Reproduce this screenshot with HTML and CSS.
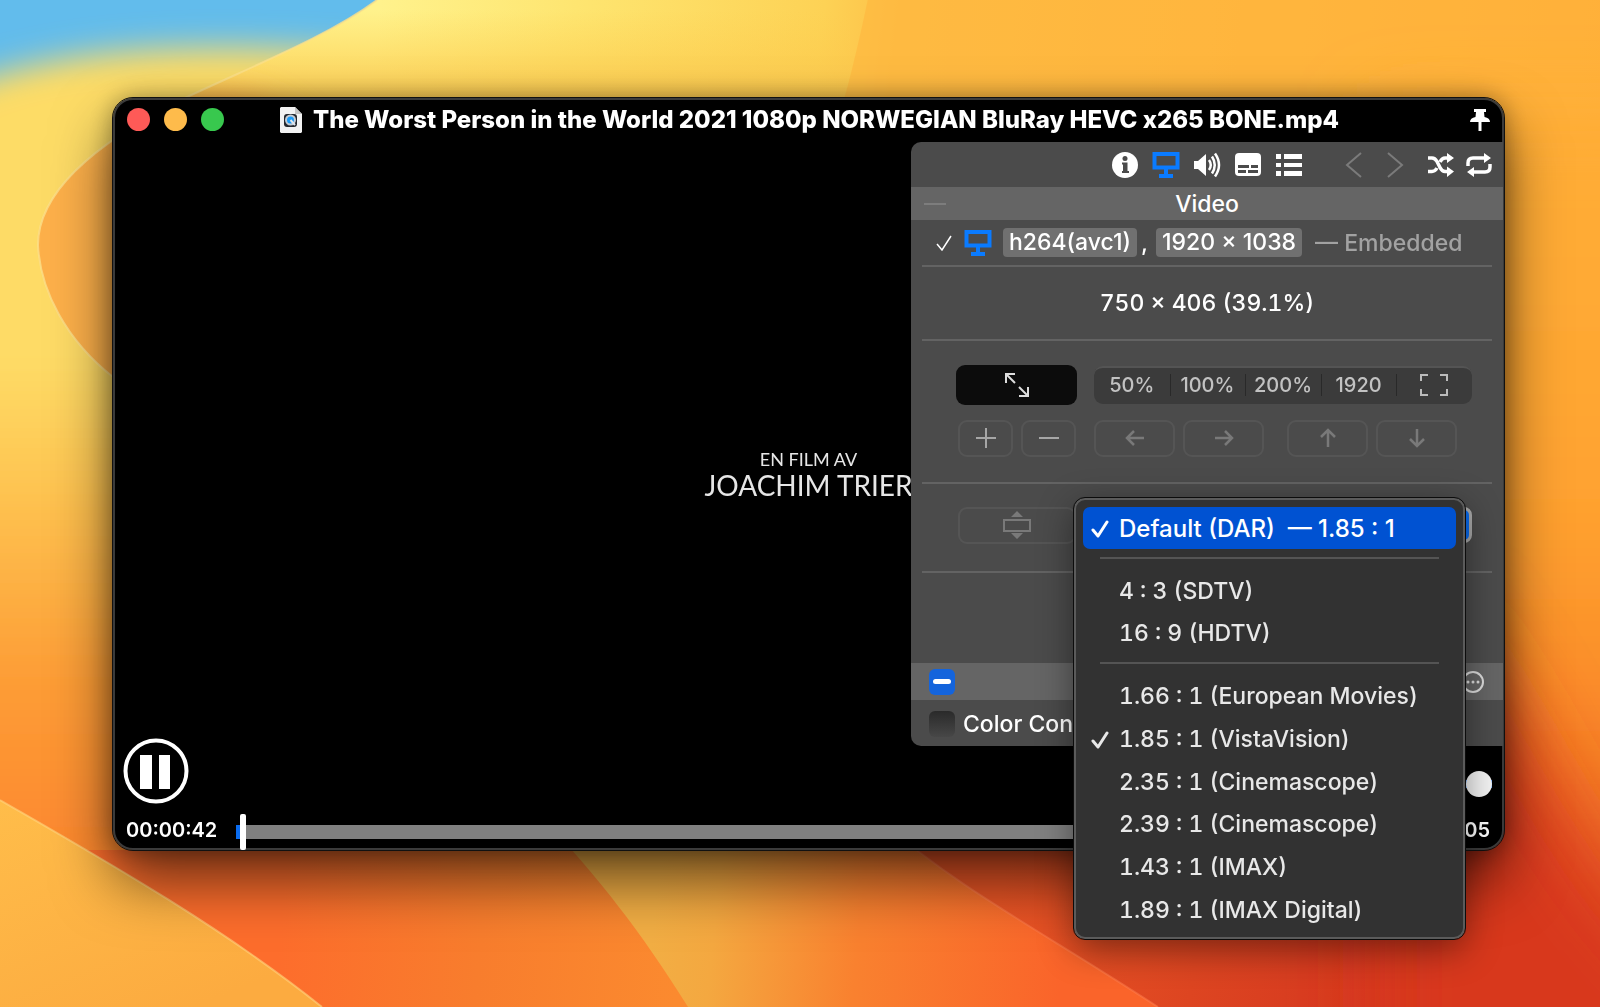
FILE: index.html
```
<!DOCTYPE html>
<html lang="en">
<head>
<meta charset="utf-8">
<title>Video Player</title>
<link rel="stylesheet" href="styles.css">
</head>
<body>
<svg class="wallpaper" viewBox="0 0 1600 1007" preserveAspectRatio="none" aria-hidden="true">
  <defs>
    <linearGradient id="left" x1="0" y1="0" x2="0" y2="1">
      <stop offset="0" stop-color="#fddc66"/><stop offset="0.3" stop-color="#fedb66"/><stop offset="0.4" stop-color="#fec854"/><stop offset="0.6" stop-color="#fd9d36"/><stop offset="0.8" stop-color="#fd842d"/><stop offset="1" stop-color="#fb6c2b"/>
    </linearGradient>
    <linearGradient id="base" gradientUnits="userSpaceOnUse" x1="380" y1="0" x2="1600" y2="140">
      <stop offset="0" stop-color="#fff28c"/><stop offset="0.16" stop-color="#fee570"/><stop offset="0.36" stop-color="#fdd255"/><stop offset="0.42" stop-color="#fdc148"/><stop offset="0.7" stop-color="#feb53e"/><stop offset="1" stop-color="#ffa934"/>
    </linearGradient>
    <linearGradient id="warm" x1="0" y1="0" x2="0" y2="1">
      <stop offset="0" stop-color="#fcd050" stop-opacity="0"/><stop offset="1" stop-color="#fcc64c"/>
    </linearGradient>
    <linearGradient id="right" x1="0" y1="0" x2="0" y2="1">
      <stop offset="0.1" stop-color="#ffac36"/><stop offset="0.4" stop-color="#ffa22f"/><stop offset="0.6" stop-color="#fa8a29"/><stop offset="0.78" stop-color="#ec6624"/><stop offset="1" stop-color="#d83a20"/>
    </linearGradient>
    <linearGradient id="corner" x1="0" y1="0" x2="0.6" y2="1">
      <stop offset="0" stop-color="#ffbd4a"/><stop offset="1" stop-color="#fcab40"/>
    </linearGradient>
    <linearGradient id="lower" gradientUnits="userSpaceOnUse" x1="280" y1="930" x2="680" y2="960">
      <stop offset="0" stop-color="#fd6d2c"/><stop offset="0.5" stop-color="#f87d2d"/><stop offset="1" stop-color="#fb8a2f"/>
    </linearGradient>
    <linearGradient id="wedge" gradientUnits="userSpaceOnUse" x1="650" y1="950" x2="1060" y2="990">
      <stop offset="0" stop-color="#f2ae44"/><stop offset="0.15" stop-color="#f4a840"/><stop offset="0.5" stop-color="#f9812f"/><stop offset="1" stop-color="#fa642a"/>
    </linearGradient>
    <linearGradient id="red" gradientUnits="userSpaceOnUse" x1="1000" y1="900" x2="1400" y2="960">
      <stop offset="0" stop-color="#ea5525"/><stop offset="0.5" stop-color="#dd4521"/><stop offset="1" stop-color="#d4361f"/>
    </linearGradient>
    <filter id="soft" filterUnits="userSpaceOnUse" x="-200" y="-200" width="2000" height="1500"><feGaussianBlur stdDeviation="16"/></filter>
    <filter id="softer" filterUnits="userSpaceOnUse" x="-200" y="-200" width="2200" height="1700"><feGaussianBlur stdDeviation="40"/></filter>
    <clipPath id="body"><path d="M377 0C330 35 262 62 187 97C80 150 38 200 38 245C40 290 66 340 113 377V800H1600V0Z"/></clipPath>
  </defs>
  <rect width="1600" height="1007" fill="#62bcec"/>
  <path d="M-60 96C40 52 160 38 380 54V1100H-60Z" fill="url(#left)" filter="url(#soft)"/>
  <g clip-path="url(#body)">
    <rect width="1600" height="1007" fill="url(#base)"/>
    <rect y="10" width="850" height="100" fill="url(#warm)"/>
    <path d="M0 130L190 96C240 84 300 110 340 170L400 500H0Z" fill="#fdb04a" filter="url(#soft)"/>
    <path d="M0 150H190V420H0Z" fill="#fdb04a"/>
    <path d="M880 -60C860 40 845 110 812 200L1700 300V-60Z" fill="#ffb63e" opacity=".6"/>
  </g>
  <path d="M377 0C330 35 262 62 187 97C80 150 38 200 38 245C40 290 66 340 113 377" fill="none" stroke="#fbe08a" stroke-width="2" opacity=".8"/>
  <path d="M1380 120H1720V1100H1380Z" fill="url(#right)" filter="url(#softer)"/>
  <path d="M0 850H800L700 1007H0Z" fill="url(#lower)"/>
  <path d="M0 800C90 852 220 925 322 1007H0Z" fill="url(#corner)"/>
  <path d="M0 800C90 852 220 925 322 1007" fill="none" stroke="#ffd680" stroke-width="2" opacity=".6"/>
  <path d="M545 820C600 880 640 930 688 1007H1250V820Z" fill="url(#wedge)"/>
  <path d="M880 820C960 890 1040 930 1158 1007H1480V820Z" fill="url(#red)"/>
  <path d="M880 820C960 890 1040 930 1158 1007" fill="none" stroke="#ff8050" stroke-width="2" opacity=".5"/>
  <path d="M1430 600C1540 720 1560 870 1720 990V1120H1380V900Z" fill="#d8381f" filter="url(#softer)"/>
</svg>

<main class="desktop">
  <section class="window" aria-label="Video player">
    <header class="titlebar">
      <div class="lights">
        <button class="light close" aria-label="Close"></button>
        <button class="light minimize" aria-label="Minimize"></button>
        <button class="light zoom" aria-label="Zoom"></button>
      </div>
      <h1 class="title">
        <svg width="24" height="28" viewBox="0 0 24 28" aria-hidden="true">
          <path d="M2 1H16L23 8V26L22 27H2L1 26V2Z" fill="#f2f2f2"/><path d="M16 1V8H23Z" fill="#c4c4c4"/>
          <rect x="5" y="8" width="13" height="13" rx="3" fill="#25282e"/>
          <circle cx="11.500" cy="14" r="4.500" fill="#1c9af5" stroke="#c3ccd6" stroke-width="2"/><path d="M11.500 14L16 19" stroke="#dfe6ee" stroke-width="2"/>
        </svg>
        <span>The Worst Person in the World 2021 1080p NORWEGIAN BluRay HEVC x265 BONE.mp4</span>
      </h1>
      <button class="pin" aria-label="Keep on top">
        <svg width="22" height="22" viewBox="0 0 22 22"><path d="M5 0H17V3H15L15.500 8Q21 9 21 13H12.500V22H9.500V13H1Q1 9 6.500 8L7 3H5Z" fill="#fff"/></svg>
      </button>
    </header>

    <div class="stage">
      <div class="film">
        <p class="film-small">EN FILM AV</p>
        <p class="film-big">JOACHIM TRIER</p>
      </div>

      <aside class="panel">
        <nav class="toolbar" aria-label="Inspector">
          <button aria-label="Info"><svg width="28" height="28" viewBox="0 0 28 28"><circle cx="14" cy="14" r="13" fill="#fff"/><circle cx="14" cy="7.500" r="2.500" fill="#4b4b4b"/><path d="M11 11.500H16.500V20H18V22H11V20H12V13.500H11Z" fill="#4b4b4b"/></svg></button>
          <button aria-label="Video"><svg width="28" height="28" viewBox="0 0 28 28"><path d="M2.500 3H25.500V16.500H2.500Z" fill="none" stroke="#0a7bff" stroke-width="4"/><path d="M12 18H16V23H21V27H7V23H12Z" fill="#0a7bff"/></svg></button>
          <button aria-label="Audio"><svg width="28" height="28" viewBox="0 0 28 28"><path d="M1 10H5L13 3V25L5 18H1Z" fill="#fff"/><path d="M16 9Q19.500 14 16 19M19 5.500Q24.500 14 19 22.500M22 2.500Q30 14 22 25.500" fill="none" stroke="#fff" stroke-width="2.500"/></svg></button>
          <button aria-label="Subtitles"><svg width="28" height="28" viewBox="0 0 28 28"><rect x="1" y="2" width="26" height="23" rx="4" fill="#fff"/><path d="M4 14H15V17H4ZM17 14H24V17H17ZM4 19H12V22H4ZM14 19H24V22H14Z" fill="#4b4b4b"/></svg></button>
          <button aria-label="Playlist"><svg width="28" height="28" viewBox="0 0 28 28"><path d="M1 3H6V8H1ZM9 3H27V8H9ZM1 12H6V16H1ZM9 12H27V16H9ZM1 20H6V25H1ZM9 20H27V25H9Z" fill="#fff"/></svg></button>
          <span class="nav-pair">
            <button aria-label="Previous"><svg width="28" height="28" viewBox="0 0 28 28"><path d="M21 2L7 14L21 26" fill="none" stroke="#7b7b7b" stroke-width="2"/></svg></button>
            <button aria-label="Next"><svg width="28" height="28" viewBox="0 0 28 28"><path d="M7 2L21 14L7 26" fill="none" stroke="#7b7b7b" stroke-width="2"/></svg></button>
          </span>
          <span class="mode-pair">
            <button aria-label="Shuffle"><svg width="26" height="24" viewBox="0 0 26 24"><path d="M0 5H4Q7 5 9 8.500L12 14.500Q14 18.500 17 18.500H20M0 18.500H4Q7 18.500 9 15M12 9Q14 5 17 5H20" fill="none" stroke="#fff" stroke-width="3.500"/><path d="M19 0L26 5L19 10ZM19 13.500L26 18.500L19 24Z" fill="#fff"/></svg></button>
            <button aria-label="Repeat"><svg width="26" height="24" viewBox="0 0 26 24"><path d="M2 13V10Q2 5 7 5H19M24 11V14Q24 19 19 19H7" fill="none" stroke="#fff" stroke-width="3.500"/><path d="M18 0L25 5L18 10ZM8 14L1 19L8 24Z" fill="#fff"/></svg></button>
          </span>
        </nav>

        <div class="section-head"><span class="dash"></span><h2>Video</h2></div>

        <div class="track-row">
          <svg width="16" height="16" viewBox="0 0 16 16" aria-hidden="true"><path d="M1 9L6 15L15 1" fill="none" stroke="#fff" stroke-width="1.500"/></svg>
          <svg class="track-icon" width="28" height="28" viewBox="0 0 28 28" aria-hidden="true"><path d="M2.500 3H25.500V16.500H2.500Z" fill="none" stroke="#0a7bff" stroke-width="4"/><path d="M12 18H16V23H21V27H7V23H12Z" fill="#0a7bff"/></svg>
          <span class="tag">h264(avc1)</span><span class="comma">,</span><span class="tag">1920 × 1038</span>
          <span class="origin">— Embedded</span>
        </div>

        <div class="size-row">750 × 406 (39.1%)</div>

        <div class="scale-block">
          <div class="scale-row">
            <button class="fit" aria-label="Fit"><svg width="26" height="26" viewBox="0 0 26 26"><path d="M2 11V2H11M3 3L11 11M15 15L23 23M24 15V24H15" fill="none" stroke="#ddd" stroke-width="2"/></svg></button>
            <div class="segments">
              <button>50%</button><button>100%</button><button>200%</button><button>1920</button>
              <button aria-label="Full screen"><svg width="28" height="22" viewBox="0 0 28 22"><path d="M8 1H1V7M20 1H27V7M1 15V21H8M27 15V21H20" fill="none" stroke="#bbb" stroke-width="2"/></svg></button>
            </div>
          </div>
          <div class="move-row">
            <div class="pair small">
              <button aria-label="Larger"><svg width="20" height="20" viewBox="0 0 20 20"><path d="M10 0V20M0 10H20" stroke="#a6a6a6" stroke-width="2"/></svg></button>
              <button aria-label="Smaller"><svg width="20" height="20" viewBox="0 0 20 20"><path d="M0 10H20" stroke="#a6a6a6" stroke-width="2"/></svg></button>
            </div>
            <div class="pair wide">
              <button aria-label="Left"><svg width="20" height="20" viewBox="0 0 20 20"><path d="M19 10H2M9 3L2 10L9 17" fill="none" stroke="#797979" stroke-width="2.500"/></svg></button>
              <button aria-label="Right"><svg width="20" height="20" viewBox="0 0 20 20"><path d="M1 10H18M11 3L18 10L11 17" fill="none" stroke="#797979" stroke-width="2.500"/></svg></button>
            </div>
            <div class="pair wide">
              <button aria-label="Up"><svg width="20" height="20" viewBox="0 0 20 20"><path d="M10 19V2M3 9L10 2L17 9" fill="none" stroke="#797979" stroke-width="2.500"/></svg></button>
              <button aria-label="Down"><svg width="20" height="20" viewBox="0 0 20 20"><path d="M10 1V18M3 11L10 18L17 11" fill="none" stroke="#797979" stroke-width="2.500"/></svg></button>
            </div>
          </div>
        </div>

        <div class="aspect-row">
          <button class="stretch" aria-label="Stretch"><svg width="28" height="28" viewBox="0 0 28 28"><path d="M1 9H27V20H1Z" fill="none" stroke="#797979" stroke-width="2"/><path d="M8 6L14 0L20 6ZM8 22H20L14 28Z" fill="#797979"/></svg></button>
          <div class="popup">
            <button class="popup-button" aria-label="Aspect ratio" aria-haspopup="menu" aria-expanded="true"></button>
            <div class="menu" role="menu">
              <button class="item selected" role="menuitem"><svg class="check" width="18" height="18" viewBox="0 0 18 18"><path d="M2 10L7 16L16 2" fill="none" stroke="#fff" stroke-width="3" stroke-linecap="round" stroke-linejoin="round"/></svg>Default (DAR) &nbsp;— 1.85 : 1</button>
              <hr>
              <div class="group">
                <button class="item" role="menuitem">4 : 3 (SDTV)</button>
                <button class="item" role="menuitem">16 : 9 (HDTV)</button>
              </div>
              <hr>
              <div class="group ratios">
                <button class="item" role="menuitem">1.66 : 1 (European Movies)</button>
                <button class="item" role="menuitem"><svg class="check" width="18" height="18" viewBox="0 0 18 18"><path d="M2 10L7 16L16 2" fill="none" stroke="#e8e8e8" stroke-width="3" stroke-linecap="round" stroke-linejoin="round"/></svg>1.85 : 1 (VistaVision)</button>
                <button class="item" role="menuitem">2.35 : 1 (Cinemascope)</button>
                <button class="item" role="menuitem">2.39 : 1 (Cinemascope)</button>
                <button class="item" role="menuitem">1.43 : 1 (IMAX)</button>
                <button class="item" role="menuitem">1.89 : 1 (IMAX Digital)</button>
              </div>
            </div>
          </div>
        </div>

        <div class="spacer"></div>

        <div class="section-head filters">
          <input type="checkbox" class="box mixed" aria-label="All filters">
          <button class="more" aria-label="More"><svg width="24" height="24" viewBox="0 0 24 24"><circle cx="12" cy="12" r="10" fill="none" stroke="#ddd" stroke-width="2"/><circle cx="7" cy="12" r="1.500" fill="#ddd"/><circle cx="12" cy="12" r="1.500" fill="#ddd"/><circle cx="17" cy="12" r="1.500" fill="#ddd"/></svg></button>
        </div>
        <div class="color-row">
          <input type="checkbox" class="box" id="color"><label for="color">Color Controls</label>
        </div>
      </aside>
    </div>

    <footer class="controls">
      <div class="play-row">
        <button class="pause" aria-label="Pause"><svg width="66" height="66" viewBox="0 0 66 66"><circle cx="33" cy="33" r="30.500" fill="none" stroke="#fff" stroke-width="4"/><path d="M17 17H29V51H17ZM36 17H47V51H36Z" fill="#fff"/></svg></button>
        <input type="range" class="volume" aria-label="Volume" min="0" max="100" value="100">
      </div>
      <div class="time-row">
        <span class="time">00:00:42</span>
        <input type="range" class="seek" aria-label="Position" min="0" max="7685" value="24">
        <span class="time">02:08:05</span>
      </div>
    </footer>
  </section>
</main>
</body>
</html>
```

FILE: styles.css
```
* { box-sizing: border-box; }
body {
  margin: 0;
  font-family: Inter, "Liberation Sans", sans-serif;
  font-size: 23px;
  font-weight: 500;
  color: #fff;
  background: #fdb53e;
}
button { margin: 0; padding: 0; border: 0; background: none; color: inherit; font: inherit; display: flex; align-items: center; justify-content: center; }
svg { display: block; flex: none; }
h1, h2, p { margin: 0; font-weight: inherit; font-size: inherit; }
input { margin: 0; appearance: none; }

.wallpaper { position: fixed; inset: 0; width: 100%; height: 100%; z-index: -1; }
.desktop { min-height: 100vh; padding: 98px 96px 40px 113px; }

.window {
  border-radius: 20px;
  background: #000;
  border: 2px solid #3b3b3b;
  outline: 1px solid #111;
  box-shadow: 0 30px 60px rgba(0, 0, 0, .6), 0 0 24px rgba(0, 0, 0, .35);
}
.titlebar { height: 42px; display: grid; grid-template-columns: 1fr auto 1fr; align-items: center; padding: 0 11px 3px 12px; }
.lights { display: flex; gap: 14px; }
.light { width: 23px; height: 23px; border-radius: 50%; }
.close { background: #fe5a57; }
.minimize { background: #febb4b; }
.zoom { background: #38c84e; }
.title { display: flex; align-items: center; gap: 10px; font-size: 24px; line-height: 30px; font-weight: 800; white-space: nowrap; }
.pin { justify-self: end; }

.stage { display: grid; grid-template-columns: 1fr; justify-items: end; }
.film { grid-area: 1 / 1; justify-self: center; align-self: center; text-align: center; font-family: Lato, sans-serif; font-weight: 400; color: #e6e6e6; padding-top: 60px; }
.film-small { font-size: 18px; line-height: 22px; }
.film-big { font-size: 28px; line-height: 30px; }

.panel { grid-area: 1 / 1; position: relative; width: 592px; margin-right: -1px; background: #4b4b4b; border-radius: 10px 0 0 10px; }
.toolbar { height: 45px; display: flex; align-items: center; justify-content: flex-end; gap: 13px; padding-right: 11px; }
.nav-pair { display: flex; gap: 13px; margin-left: 24px; }
.mode-pair { display: flex; gap: 12px; margin-left: 6px; }
.section-head { height: 33px; background: #656565; display: flex; align-items: center; justify-content: center; position: relative; }
.dash { position: absolute; left: 13px; width: 22px; height: 2px; background: #7d7d7d; }
.track-row { height: 47px; margin: 0 11px; padding-left: 14px; display: flex; align-items: center; border-bottom: 2px solid #636363; white-space: nowrap; }
.track-icon { margin: 0 11px 0 12px; }
.tag { background: #707070; border-radius: 4px; padding: 0 6px; line-height: 29px; }
.comma { width: 19px; padding-left: 4px; }
.origin { color: #a2a2a2; margin-left: 13px; }
.size-row { height: 74px; margin: 0 11px; display: flex; align-items: center; justify-content: center; border-bottom: 2px solid #636363; font-variant-numeric: tabular-nums; }

.scale-block { height: 143px; margin: 0 11px; padding: 24px 20px 0 34px; border-bottom: 2px solid #636363; }
.scale-row { display: flex; gap: 17px; align-items: center; }
.fit { width: 121px; height: 40px; border-radius: 9px; background: #0c0c0c; }
.segments { flex: 1; height: 38px; border-radius: 9px; background: #3b3b3b; border-top: 2px solid #545454; padding-bottom: 2px; display: grid; grid-template-columns: repeat(5, 1fr); font-size: 20px; color: #c2c2c2; }
.segments button { position: relative; }
.segments button + button::before { content: ""; position: absolute; left: 0; top: 6px; width: 1px; height: 22px; background: #292929; }
.move-row { display: flex; margin: 15px 0 0 2px; }
.pair { display: flex; gap: 8px; }
.pair button, .stretch { height: 37px; border: 2px solid #555; border-radius: 9px; padding-bottom: 2px; }
.small { margin-right: 18px; }
.small button { width: 55px; }
.wide { margin-right: 23px; }
.wide button { width: 81px; }

.aspect-row { height: 89px; margin: 0 11px; padding: 23px 20px 0 36px; display: flex; gap: 18px; border-bottom: 2px solid #636363; }
.stretch { width: 118px; }
.popup { position: relative; flex: 1; }
.popup-button { width: 100%; height: 36px; border-radius: 8px; background: #0a6cf0; border: 3px solid #a9a9a9; }
.menu {
  position: absolute; z-index: 2; right: 7px; top: -9px; width: 391px;
  padding: 7px 7px 6px;
  background: #323232; border: 2px solid #5b5b5b; outline: 1px solid #0c0c0c; border-radius: 11px;
  box-shadow: 0 10px 36px rgba(0, 0, 0, .45);
}
.item { width: 100%; height: 42px; padding-left: 36px; justify-content: flex-start; color: #e8e8e8; white-space: nowrap; position: relative; border-radius: 7px; }
.selected { background: #0052d2; color: #fff; font-size: 24px; }
.check { position: absolute; left: 8px; top: 13px; }
.menu hr { height: 2px; margin: 8px 17px 11px; border: 0; background: #545454; }
.group { display: grid; font-variant-numeric: tabular-nums; }
.ratios { height: 256px; align-content: space-between; }

.spacer { height: 90px; }
.filters { height: 37px; justify-content: space-between; padding: 0 18px; }
.box { width: 26px; height: 26px; border-radius: 6px; background: linear-gradient(#2a2a2a, #474747); }
.mixed { background: #1464dc; display: grid; place-items: center; }
.mixed::before { content: ""; width: 18px; height: 5px; border-radius: 3px; background: #fff; }
.color-row { height: 46px; display: flex; align-items: center; gap: 8px; padding: 2px 18px 0; }

.controls { margin-top: -8px; padding: 0 10px 0 8px; }
.play-row { height: 66px; display: flex; align-items: flex-end; justify-content: space-between; }
.pause { height: 66px; }
.volume { width: 180px; height: 26px; margin-bottom: 7px; background: linear-gradient(#0a6cf0, #0a6cf0) center / 100% 8px no-repeat; }
.volume::-webkit-slider-thumb { appearance: none; width: 26px; height: 26px; border-radius: 50%; background: #f4f4f4; }
.time-row { height: 44px; display: flex; align-items: center; gap: 19px; padding: 8px 2px 0 3px; }
.time { font-size: 20px; line-height: 24px; font-weight: 600; }
.seek { flex: 1; height: 36px; align-self: flex-start; margin-top: 2px; background: linear-gradient(90deg, #0a6cf0 5px, #808080 5px) center / 100% 14px no-repeat; }
.seek::-webkit-slider-thumb { appearance: none; width: 6px; height: 36px; border-radius: 2px; background: #fff; }
```
